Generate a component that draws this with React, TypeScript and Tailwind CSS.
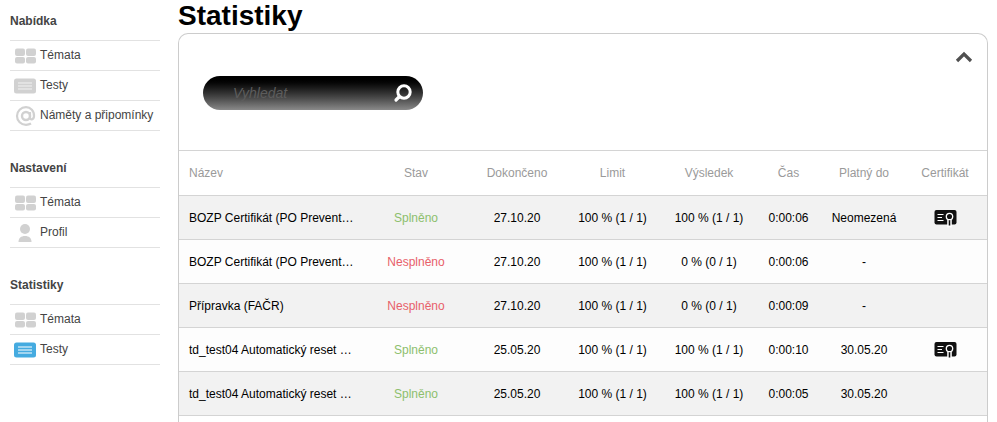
import React from 'react';

const cols = 'grid grid-cols-[187px_100px_102px_89px_104px_55px_96px_66px_1fr] items-center';

const GridIcon = () => (
  <svg width="22" height="16" viewBox="0 0 22 16" className="shrink-0">
    <rect x="1" y="0.5" width="10" height="7.500" rx="2" fill="#d1d1d1" />
    <rect x="12" y="0.5" width="10" height="7.500" rx="2" fill="#d1d1d1" />
    <rect x="1" y="9" width="10" height="6.500" rx="2" fill="#d1d1d1" />
    <rect x="12" y="9" width="10" height="6.500" rx="2" fill="#d1d1d1" />
  </svg>
);

const ListIcon = ({ active }: { active?: boolean }) => (
  <svg width="22" height="16" viewBox="0 0 22 16" className="shrink-0">
    <rect x="0" y="0.5" width="22" height="15" rx="2.5" fill={active ? '#45abe0' : '#d1d1d1'} />
    <path d="M4 5h14M4 8h14M4 11h14" stroke={active ? '#ffffff' : '#f2f2f2'} strokeWidth="1" />
  </svg>
);

const ProfileIcon = () => (
  <svg width="22" height="18" viewBox="0 0 22 18" className="shrink-0">
    <circle cx="11" cy="5" r="5" fill="#d1d1d1" />
    <path d="M4.5 18c0-4 2.500-6 6.500-6s6.500 2 6.500 6z" fill="#d1d1d1" />
  </svg>
);

// the @ in the menu is an icon, drawn with two rings and a tail
const AtIcon = () => (
  <svg width="22" height="20" viewBox="0 0 22 20" className="shrink-0">
    <circle cx="12" cy="10" r="4" fill="none" stroke="#d1d1d1" strokeWidth="2.400" />
    <path
      d="M16 6v6c0 2 3.500 2 4-1.500C20.500 5 16.500 1.200 12 1.200 7 1.200 3 5 3 10s4 8.800 9 8.800c2 0 3.500-.4 5-1.300"
      fill="none"
      stroke="#d1d1d1"
      strokeWidth="2.200"
    />
  </svg>
);

const CertIcon = () => (
  <svg width="23" height="18" viewBox="0 0 23 18" className="mx-auto">
    <rect x="0.500" y="0" width="22" height="14.500" rx="2" fill="#111111" />
    <path d="M3.500 4.500h6M3.500 7.500h4.500M3.500 10.500h6" stroke="#ffffff" strokeWidth="1.200" />
    <path d="M13.200 9v8.500h1.300l1-1 1 1h1.300V9z" fill="#ffffff" />
    <path d="M14.700 10v5.500h1.600V10z" fill="#111111" />
    <circle cx="15.500" cy="6.500" r="3.200" fill="#111111" stroke="#ffffff" strokeWidth="1.300" />
  </svg>
);

type NavItem = { label: string; icon: React.ReactNode };

const NavSection = ({ title, items, className }: { title: string; items: NavItem[]; className: string }) => (
  <div className={className}>
    <h3 className="text-[12px] leading-[14px] font-bold text-[#444444] mb-[12px]">{title}</h3>
    <ul className="border-t border-[#e2e2e2]">
      {items.map((item, i) => (
        <li key={i} className="h-[30px] border-b border-[#e2e2e2] flex items-center pl-[4px] gap-[4px] text-[12px] text-[#444444] whitespace-nowrap">
          {item.icon}
          <span className="-mt-[2px]">{item.label}</span>
        </li>
      ))}
    </ul>
  </div>
);

const rows = [
  { name: 'BOZP Certifikát (PO Preventista)', ok: true, done: '27.10.20', limit: '100 % (1 / 1)', result: '100 % (1 / 1)', time: '0:00:06', valid: 'Neomezená', cert: true },
  { name: 'BOZP Certifikát (PO Preventista)', ok: false, done: '27.10.20', limit: '100 % (1 / 1)', result: '0 % (0 / 1)', time: '0:00:06', valid: '-', cert: false },
  { name: 'Přípravka (FAČR)', ok: false, done: '27.10.20', limit: '100 % (1 / 1)', result: '0 % (0 / 1)', time: '0:00:09', valid: '-', cert: false },
  { name: 'td_test04 Automatický reset testu', ok: true, done: '25.05.20', limit: '100 % (1 / 1)', result: '100 % (1 / 1)', time: '0:00:10', valid: '30.05.20', cert: true },
  { name: 'td_test04 Automatický reset testu', ok: true, done: '25.05.20', limit: '100 % (1 / 1)', result: '100 % (1 / 1)', time: '0:00:05', valid: '30.05.20', cert: false },
];

export default function App() {
  return (
    <div className="h-[422px] overflow-hidden bg-white flex font-['Liberation_Sans',Arial,sans-serif]">
      <aside className="w-[150px] ml-[10px] shrink-0">
        <NavSection
          title="Nabídka"
          className="pt-[14px]"
          items={[
            { label: 'Témata', icon: <GridIcon /> },
            { label: 'Testy', icon: <ListIcon /> },
            { label: 'Náměty a připomínky', icon: <AtIcon /> },
          ]}
        />
        <NavSection
          title="Nastavení"
          className="pt-[30px]"
          items={[
            { label: 'Témata', icon: <GridIcon /> },
            { label: 'Profil', icon: <ProfileIcon /> },
          ]}
        />
        <NavSection
          title="Statistiky"
          className="pt-[30px]"
          items={[
            { label: 'Témata', icon: <GridIcon /> },
            { label: 'Testy', icon: <ListIcon active /> },
          ]}
        />
      </aside>

      <main className="ml-[18px] w-[810px] shrink-0">
        <h1 className="h-[33px] text-[28px] leading-[31px] font-bold text-black">Statistiky</h1>
        <div className="border border-b-0 border-[#cccccc] rounded-t-[10px] h-[389px] overflow-hidden">
          <div className="h-[117px] pl-[24px] pr-[14px] pt-[14px] flex justify-between items-start border-b border-[#d4d4d4]">
            <div className="mt-[28px] w-[220px] h-[34px] rounded-full bg-gradient-to-b from-black to-[#8a8a8a] flex items-center pl-[30px] pr-[9px]">
              <input
                placeholder="Vyhledat"
                className="w-[150px] bg-transparent outline-none italic text-[14px] placeholder:text-[#5c5c5c]"
              />
              <svg width="22" height="22" viewBox="0 0 22 22" className="ml-auto">
                <circle cx="12" cy="10" r="6.200" fill="none" stroke="#ffffff" strokeWidth="3" />
                <path d="M7 15l-3 3" stroke="#ffffff" strokeWidth="3.200" strokeLinecap="round" />
              </svg>
            </div>
            <svg width="18" height="12" viewBox="0 0 18 12" className="mt-[3px]">
              <path d="M2 10l7-7 7 7" fill="none" stroke="#505050" strokeWidth="3.200" />
            </svg>
          </div>

          <div className={`${cols} h-[45px] text-[12px] text-[#9a9a9a] text-center border-b border-[#d4d4d4]`}>
            <div className="text-left pl-[10px]">Název</div>
            <div>Stav</div>
            <div>Dokončeno</div>
            <div>Limit</div>
            <div>Výsledek</div>
            <div>Čas</div>
            <div>Platný do</div>
            <div>Certifikát</div>
          </div>

          {rows.map((row, i) => (
            <div
              key={i}
              className={`${cols} h-[44px] text-[12px] text-black text-center border-b border-[#d4d4d4] ${i % 2 === 0 ? 'bg-[#f2f2f2]' : 'bg-[#fdfdfd]'}`}
            >
              <div className="text-left pl-[10px] pr-[12px] truncate">{row.name}</div>
              <div className={row.ok ? 'text-[#8dbf6d]' : 'text-[#e8606a]'}>{row.ok ? 'Splněno' : 'Nesplněno'}</div>
              <div>{row.done}</div>
              <div>{row.limit}</div>
              <div>{row.result}</div>
              <div>{row.time}</div>
              <div>{row.valid}</div>
              <div className="pt-[3px]">{row.cert && <CertIcon />}</div>
            </div>
          ))}
        </div>
      </main>
    </div>
  );
}
